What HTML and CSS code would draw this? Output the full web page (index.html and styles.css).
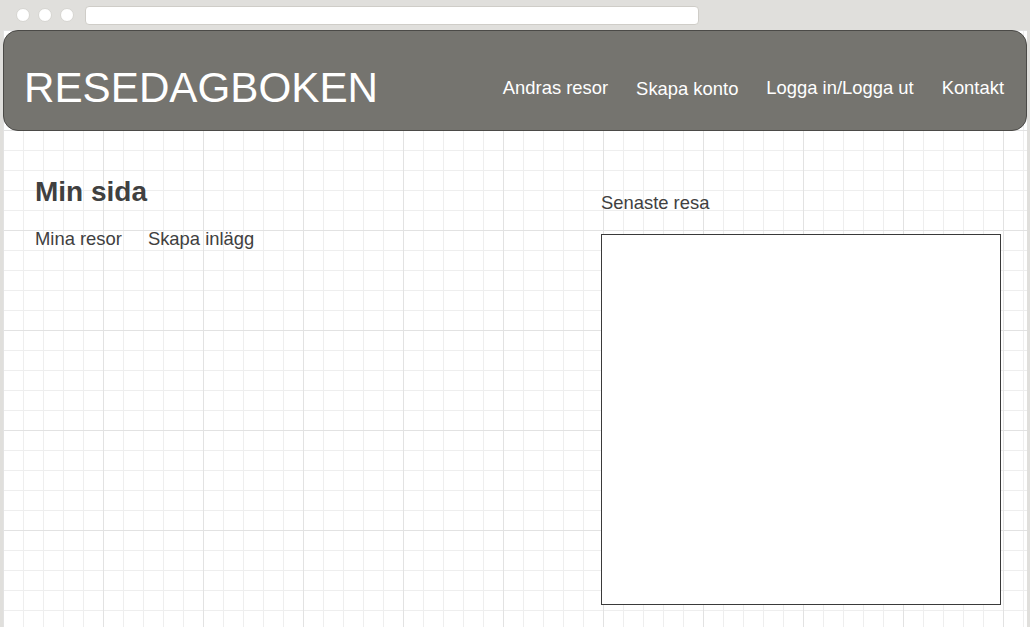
FILE: index.html
```html
<!DOCTYPE html>
<html lang="sv">
<head>
<meta charset="utf-8">
<title>Resedagboken</title>
<link rel="stylesheet" href="styles.css">
</head>
<body>
<div class="chrome">
  <div class="dots"><span class="dot"></span><span class="dot"></span><span class="dot"></span></div>
  <div class="urlbar"></div>
</div>
<div class="page">
  <header class="header">
    <div class="logo">RESEDAGBOKEN</div>
    <nav class="nav">
      <a class="nav-link">Andras resor</a>
      <a class="nav-link nav-low">Skapa konto</a>
      <a class="nav-link">Logga in/Logga ut</a>
      <a class="nav-link">Kontakt</a>
    </nav>
  </header>
  <main class="main">
    <section class="left">
      <h1 class="title">Min sida</h1>
      <div class="sublinks">
        <a class="sublink">Mina resor</a>
        <a class="sublink">Skapa inlägg</a>
      </div>
    </section>
    <section class="right">
      <p class="latest">Senaste resa</p>
      <div class="latest-box"></div>
    </section>
  </main>
</div>
</body>
</html>
```
FILE: styles.css
```css
* { box-sizing: border-box; }
html, body { margin: 0; padding: 0; }
body {
  background: #e0dfdc;
  font-family: "Liberation Sans", Arial, sans-serif;
  width: 1030px;
  height: 627px;
  overflow: hidden;
}
.chrome {
  height: 30px;
  display: flex;
  align-items: flex-start;
  padding-top: 6px;
  padding-left: 16px;
}
.dots {
  display: flex;
  gap: 8px;
  margin-top: 2px;
}
.dot {
  width: 14px;
  height: 14px;
  border-radius: 50%;
  background: #ffffff;
  border: 1px solid #d6d5d1;
}
.urlbar {
  margin-left: 11px;
  width: 614px;
  height: 19px;
  background: #ffffff;
  border: 1px solid #cfcdc8;
  border-radius: 4px;
}
.page {
  margin: 0 3px;
  height: 597px;
  background-color: #ffffff;
  background-image:
    linear-gradient(to bottom, #e2e2e2 1px, transparent 1px),
    linear-gradient(to right, #e2e2e2 1px, transparent 1px),
    linear-gradient(to bottom, #eeeeee 1px, transparent 1px),
    linear-gradient(to right, #eeeeee 1px, transparent 1px);
  background-size: 100px 100px, 100px 100px, 20px 20px, 20px 20px;
  color: #404040;
}
.header {
  height: 101px;
  background: #75746f;
  border: 1px solid #4b4a47;
  border-radius: 15px;
  display: flex;
  align-items: flex-start;
  justify-content: space-between;
  padding: 0 22px 0 20px;
  color: #ffffff;
}
.logo {
  font-size: 42.2px;
  line-height: 48px;
  margin-top: 33px;
}
.nav {
  display: flex;
  gap: 28px;
  margin-top: 46px;
}
.nav-link {
  font-size: 18.4px;
  line-height: 21px;
  color: #ffffff;
}
.nav-low { margin-top: 1px; }
.main {
  display: grid;
  grid-template-columns: 1fr 400px;
  padding: 0 26px 0 32px;
}
.title {
  margin: 45px 0 0;
  font-size: 28px;
  line-height: 32px;
  font-weight: bold;
}
.sublinks {
  display: flex;
  gap: 26px;
  margin-top: 20px;
}
.sublink {
  font-size: 18.4px;
  line-height: 21px;
}
.latest {
  margin: 61px 0 0;
  font-size: 18.4px;
  line-height: 21px;
}
.latest-box {
  margin-top: 21px;
  width: 400px;
  height: 371px;
  background: #ffffff;
  border: 1px solid #3a3a3a;
}
```
